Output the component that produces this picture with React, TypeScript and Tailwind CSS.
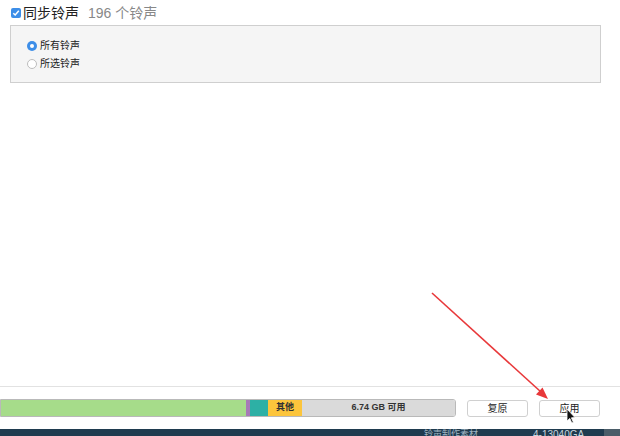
import React from "react";

const cjk = { fontFamily: '"Helvetica Neue", "Liberation Sans", "Noto Sans CJK SC", sans-serif' };

function Radio({ checked, label }: { checked: boolean; label: string }) {
  return (
    <div className="flex items-center h-[18px] gap-[3px]">
      {checked ? (
        <span className="w-[10px] h-[10px] rounded-full bg-[#3d8ee8] flex items-center justify-center">
          <span className="w-[4px] h-[4px] rounded-full bg-white" />
        </span>
      ) : (
        <span className="w-[10px] h-[10px] rounded-full border border-[#bdbdbd] bg-white" />
      )}
      <span className="text-[10px] leading-none text-[#222]">{label}</span>
    </div>
  );
}

function Segment({ w, color, children }: { w: number; color: string; children?: React.ReactNode }) {
  return (
    <div
      className="h-full flex items-center justify-center text-[9px] font-bold text-[#333]"
      style={{ width: w, background: color }}
    >
      {children}
    </div>
  );
}

export default function App() {
  return (
    <div className="relative w-[620px] h-[436px] bg-white flex flex-col overflow-hidden" style={cjk}>
      {/* sync header */}
      <div className="h-[25px] flex items-center pl-[11px] pt-[1px]">
        <span className="w-[10px] h-[10px] rounded-[2px] bg-[#3d8ee8] flex items-center justify-center">
          <svg width="8" height="8" viewBox="0 0 8 8">
            <path d="M1.3 4.2 L3.2 6 L6.8 1.8" stroke="white" strokeWidth="1.5" fill="none" />
          </svg>
        </span>
        <span className="ml-[2px] text-[14px] leading-none text-[#222]">同步铃声</span>
        <span className="ml-[9px] text-[14px] leading-none text-[#888]">196 个铃声</span>
      </div>

      {/* ringtone options */}
      <div className="ml-[10px] w-[591px] h-[58px] border border-[#cfcfcf] bg-[#f5f5f5] pl-[16px] pt-[11px] flex flex-col">
        <Radio checked label="所有铃声" />
        <Radio checked={false} label="所选铃声" />
      </div>

      <div className="flex-1" />

      {/* capacity bar and actions */}
      <div className="h-[43px] border-t border-[#e2e2e2] flex items-start pt-[12px]">
        <div className="h-[18px] w-[456px] flex border border-[#b9b9b9] rounded-r-[3px] overflow-hidden">
          <Segment w={245} color="#a6dc8a" />
          <Segment w={4} color="#a77ab7" />
          <Segment w={18} color="#2db0a5" />
          <Segment w={34} color="#fcc53c">其他</Segment>
          <Segment w={153} color="#dadada">6.74 GB 可用</Segment>
        </div>
        <button className="ml-[11px] mt-[1px] w-[61px] h-[17px] rounded-[3px] border border-[#d0d0d0] bg-white text-[10px] leading-none text-[#222] flex items-center justify-center">
          复原
        </button>
        <button className="ml-[11px] mt-[1px] w-[61px] h-[17px] rounded-[3px] border border-[#d0d0d0] bg-white text-[10px] leading-none text-[#222] flex items-center justify-center">
          应用
        </button>
      </div>

      {/* desktop strip below the window */}
      <div className="h-[7px] bg-[#1f3b4f] relative overflow-hidden">
        <span className="absolute left-[424px] top-[1px] text-[9px] leading-none text-[#9fb4c2]">铃声制作素材</span>
        <span className="absolute left-[533px] top-[1px] text-[10px] leading-none text-[#c9d6de]">4-13040GA</span>
        <span className="absolute left-[604px] top-0 w-[16px] h-[7px] bg-[#4b5d69]" />
      </div>

      {/* red pointer arrow and mouse cursor */}
      <svg className="absolute left-0 top-0 pointer-events-none" width="620" height="436">
        <line x1="432" y1="293" x2="541" y2="392" stroke="#e8383a" strokeWidth="1.6" />
        <polygon points="548,399 536,394.5 542.5,387.5" fill="#e8383a" />
        <path
          d="M567 409 L567 421 L569.8 418.4 L571.8 423 L573.4 422.3 L571.4 417.8 L575 417.6 Z"
          fill="#111"
          stroke="white"
          strokeWidth="0.8"
        />
      </svg>
    </div>
  );
}
